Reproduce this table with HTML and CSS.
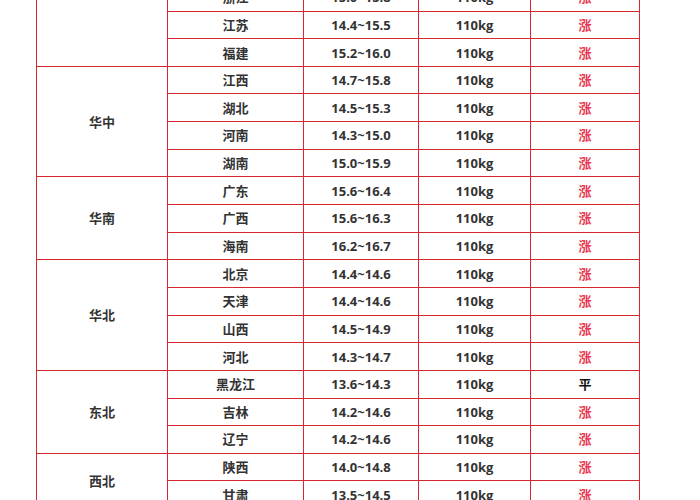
FILE: index.html
```html
<!DOCTYPE html>
<html lang="zh">
<head>
<meta charset="utf-8">
<link rel="stylesheet" href="styles.css">
</head>
<body>
<div class="wrap">
<table class="price">
<colgroup><col class="c1"><col class="c2"><col class="c3"><col class="c4"><col class="c5"></colgroup>
<tbody>
<tr><td rowspan="6" class="region">华东</td><td>上海</td><td>15.0~15.6</td><td>110kg</td><td class="up">涨</td></tr>
<tr><td>山东</td><td>14.6~15.2</td><td>110kg</td><td class="up">涨</td></tr>
<tr><td>安徽</td><td>14.5~15.4</td><td>110kg</td><td class="up">涨</td></tr>
<tr><td>浙江</td><td>15.0~15.8</td><td>110kg</td><td class="up">涨</td></tr>
<tr><td>江苏</td><td>14.4~15.5</td><td>110kg</td><td class="up">涨</td></tr>
<tr><td>福建</td><td>15.2~16.0</td><td>110kg</td><td class="up">涨</td></tr>
<tr><td rowspan="4" class="region">华中</td><td>江西</td><td>14.7~15.8</td><td>110kg</td><td class="up">涨</td></tr>
<tr><td>湖北</td><td>14.5~15.3</td><td>110kg</td><td class="up">涨</td></tr>
<tr><td>河南</td><td>14.3~15.0</td><td>110kg</td><td class="up">涨</td></tr>
<tr><td>湖南</td><td>15.0~15.9</td><td>110kg</td><td class="up">涨</td></tr>
<tr><td rowspan="3" class="region">华南</td><td>广东</td><td>15.6~16.4</td><td>110kg</td><td class="up">涨</td></tr>
<tr><td>广西</td><td>15.6~16.3</td><td>110kg</td><td class="up">涨</td></tr>
<tr><td>海南</td><td>16.2~16.7</td><td>110kg</td><td class="up">涨</td></tr>
<tr><td rowspan="4" class="region">华北</td><td>北京</td><td>14.4~14.6</td><td>110kg</td><td class="up">涨</td></tr>
<tr><td>天津</td><td>14.4~14.6</td><td>110kg</td><td class="up">涨</td></tr>
<tr><td>山西</td><td>14.5~14.9</td><td>110kg</td><td class="up">涨</td></tr>
<tr><td>河北</td><td>14.3~14.7</td><td>110kg</td><td class="up">涨</td></tr>
<tr><td rowspan="3" class="region">东北</td><td>黑龙江</td><td>13.6~14.3</td><td>110kg</td><td class="flat">平</td></tr>
<tr><td>吉林</td><td>14.2~14.6</td><td>110kg</td><td class="up">涨</td></tr>
<tr><td>辽宁</td><td>14.2~14.6</td><td>110kg</td><td class="up">涨</td></tr>
<tr><td rowspan="2" class="region">西北</td><td>陕西</td><td>14.0~14.8</td><td>110kg</td><td class="up">涨</td></tr>
<tr><td>甘肃</td><td>13.5~14.5</td><td>110kg</td><td class="up">涨</td></tr>
</tbody>
</table>
</div>
</body>
</html>
```
FILE: styles.css
```css
html, body {
  margin: 0;
  padding: 0;
  background: #ffffff;
  overflow: hidden;
}
.wrap {
  padding-left: 36px;
  margin-top: -100px;
}
.price {
  border-collapse: collapse;
  width: 603px;
  table-layout: fixed;
  font-family: "Open Sans", "Noto Sans CJK SC", sans-serif;
  font-size: 13px;
  font-weight: 700;
  color: #333333;
}
.c1 { width: 131px; }
.c2 { width: 136px; }
.c3 { width: 115px; }
.c4 { width: 112px; }
.c5 { width: 109px; }
.price tr {
  height: 27.65px;
}
.price td {
  border: 1px solid #d8282f;
  text-align: center;
  vertical-align: middle;
  padding: 0;
  line-height: 16px;
}
.price td.region {
  font-weight: 700;
}
.price td.up {
  color: #e8384f;
  font-weight: 700;
}
.price td.flat {
  color: #111111;
  font-weight: 700;
}
```
